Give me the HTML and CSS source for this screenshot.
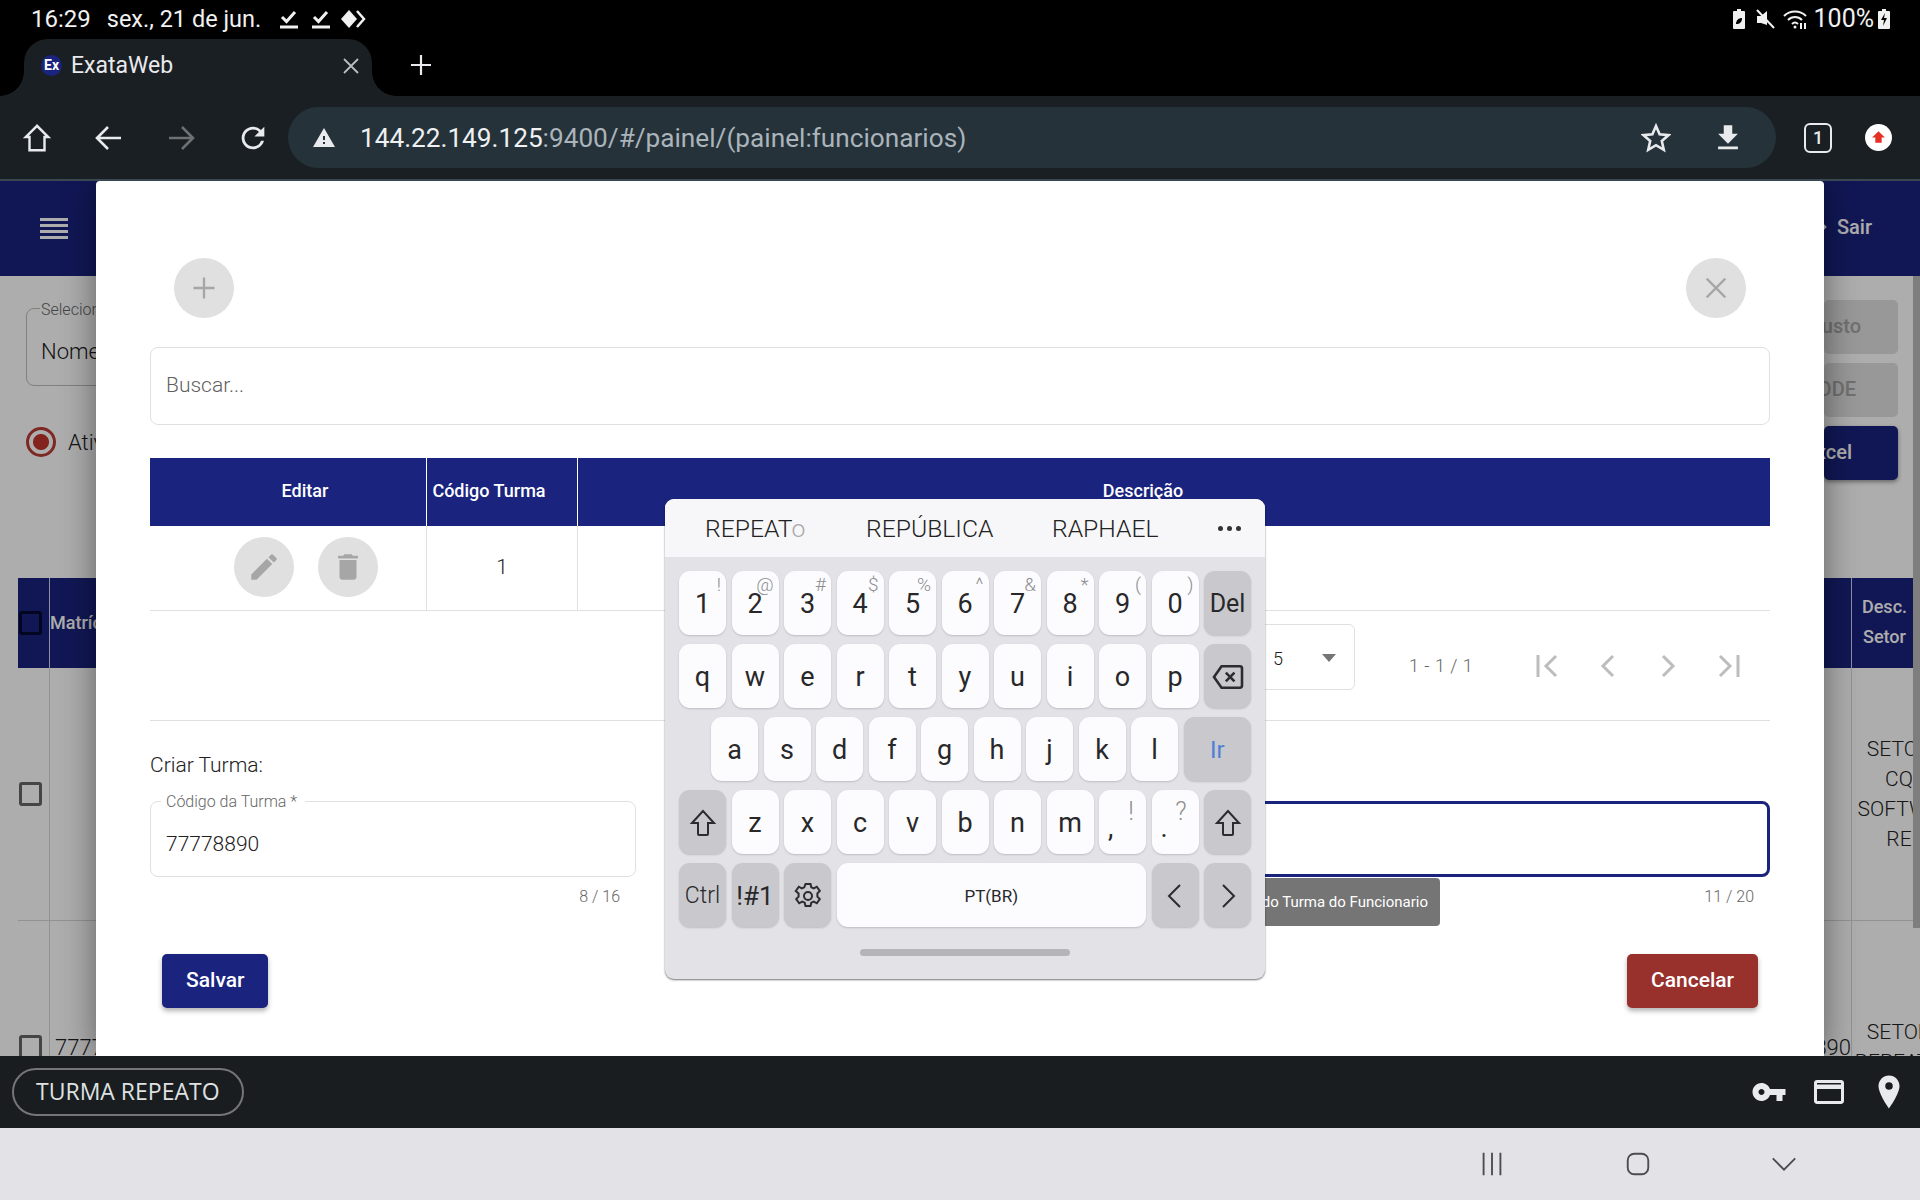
FILE: index.html
```html
<!DOCTYPE html>
<html lang="pt-BR">
  <head>
    <meta charset="UTF-8" />
    <title>ExataWeb</title>
    <link rel="stylesheet" href="styles.css" />
  </head>
  <body>
    <!-- status bar -->
    <div class="status">
      <span class="clock">16:29</span>
      <span class="date">sex., 21 de jun.</span>
      <svg class="st-check" viewBox="0 0 20 20"><path d="M3 8l4.500 4.500L16 3" /><path d="M1 18h18" /></svg>
      <svg class="st-check" viewBox="0 0 20 20"><path d="M3 8l4.500 4.500L16 3" /><path d="M1 18h18" /></svg>
      <svg class="st-diamond" viewBox="0 0 26 20"><path class="fill" d="M9 1l8 9-8 9-8-9z" /><path d="M17 2l7 8-7 8" /></svg>
      <span class="grow"></span>
      <svg class="st-ico" viewBox="0 0 16 22"><path class="fill" d="M3 3h3V1h4v2h3a1 1 0 0 1 1 1v16a1 1 0 0 1-1 1H3a1 1 0 0 1-1-1V4a1 1 0 0 1 1-1z" /><path class="cut" d="M5 16c0-4 3-6 6-6 0 4-2 6-6 6z" /></svg>
      <svg class="st-ico mute" viewBox="0 0 22 22"><path class="fill" d="M3 8h4l6-5v14l-6-2H3z" /><path d="M3 2l17 18" /></svg>
      <svg class="st-ico wifi" viewBox="0 0 26 22"><path d="M2 8c6-6 16-6 22 0M6 12c4-4 10-4 14 0M10 16c2-2 4-2 6 0M19 15v6M23 15v6" /><circle class="fill" cx="13" cy="19" r="1.500" /></svg>
      <span class="batt-num">100%</span>
      <svg class="st-ico batt" viewBox="0 0 16 22"><path class="fill" d="M3 3h3V1h4v2h3a1 1 0 0 1 1 1v16a1 1 0 0 1-1 1H3a1 1 0 0 1-1-1V4a1 1 0 0 1 1-1z" /><path class="cut" d="M9 5l-4 7h3l-1 6 4-8H8z" /></svg>
    </div>

    <!-- tab strip -->
    <div class="tabstrip">
      <div class="tab">
        <span class="favicon">Ex</span>
        <span class="tab-title">ExataWeb</span>
        <svg class="tab-close" viewBox="0 0 20 20"><path d="M3 3l14 14M17 3L3 17" /></svg>
      </div>
      <svg class="tab-new" viewBox="0 0 24 24"><path d="M12 2v20M2 12h20" /></svg>
    </div>

    <!-- toolbar -->
    <div class="toolbar">
      <span class="slot"><svg class="t-ico" viewBox="0 0 30 32"><path d="M15 3L3 15h4v14h16V15h4z" /></svg></span>
      <span class="slot"><svg class="t-ico" viewBox="0 0 30 30"><path d="M27 15H4M14 4L3 15l11 11" /></svg></span>
      <span class="slot dim"><svg class="t-ico" viewBox="0 0 30 30"><path d="M3 15h23M16 4l11 11-11 11" /></svg></span>
      <span class="slot"><svg class="t-fill" viewBox="0 0 24 24"><path d="M17.650 6.350A7.958 7.958 0 0 0 12 4c-4.420 0-7.990 3.580-7.990 8s3.570 8 7.990 8c3.730 0 6.840-2.550 7.730-6h-2.080A5.990 5.990 0 0 1 12 18c-3.310 0-6-2.690-6-6s2.690-6 6-6c1.660 0 3.140.690 4.220 1.780L13 11h7V4l-2.350 2.350z" /></svg></span>
      <div class="omnibox">
        <svg class="warn" viewBox="0 0 24 24"><path d="M1 21h22L12 2 1 21zm12-3h-2v-2h2v2zm0-4h-2v-4h2v4z" /></svg>
        <span class="url"><b>144.22.149.125</b>:9400/#/painel/(painel:funcionarios)</span>
        <span class="grow"></span>
        <span class="slot"><svg class="t-ico star" viewBox="0 0 30 30"><path d="M15 3l3.600 8.300 9 .8-6.800 5.900 2 8.800-7.800-4.600-7.800 4.600 2-8.800L2.400 12.100l9-.8z" /></svg></span>
        <span class="slot"><svg class="t-fill" viewBox="0 0 24 24"><path d="M19 9h-4V3H9v6H5l7 7 7-7zM5 18v2h14v-2H5z" /></svg></span>
      </div>
      <span class="slot sm"><span class="tab-count">1</span></span>
      <span class="slot sm"><span class="update"><svg viewBox="0 0 16 16"><path d="M8 2L2 8h3v5h6V8h3z" /></svg></span></span>
    </div>

    <div class="viewport">
      <!-- page behind the dialog -->
      <div class="page">
        <div class="page-head">
          <div class="burger"><i></i><i></i><i></i><i></i></div>
          <span class="sair"><svg viewBox="0 0 24 24"><path d="M3 12h15M12 6l6 6-6 6" /></svg>Sair</span>
        </div>
        <div class="page-body">
          <div class="bg-left">
            <div class="bg-select">
              <span class="bg-select-label">Selecionar</span>
              Nome
            </div>
            <div class="bg-radio"><span class="radio"></span>Ativo</div>
            <div class="bg-thead">
              <span class="bg-cb-cell"><span class="cb"></span></span>
              <span class="bg-th">Matrícula</span>
            </div>
            <div class="bg-row">
              <span class="bg-cb-cell"><span class="cb"></span></span>
            </div>
            <div class="bg-row">
              <span class="bg-cb-cell"><span class="cb"></span></span>
              <span class="bg-td">77778890</span>
            </div>
          </div>
          <div class="bg-right">
            <div class="bg-btn b-custo"><span>Custo</span></div>
            <div class="bg-btn b-code"><span>CODE</span></div>
            <div class="bg-btn b-excel"><span>Excel</span></div>
            <div class="bg-thead-r">
              <span class="bg-sp"></span>
              <span class="bg-th-r">Desc.<br />Setor</span>
            </div>
            <div class="bg-row-r">
              <span class="bg-sp"></span>
              <span class="bg-td-r">SETOR<br />CQ<br />SOFTWA<br />RE</span>
            </div>
            <div class="bg-row-r">
              <span class="bg-sp num">77890</span>
              <span class="bg-td-r">SETOR<br />REPEATO</span>
            </div>
          </div>
        </div>
        <div class="backdrop"></div>
        <div class="scroll-thumb"></div>
      </div>

      <!-- dialog -->
      <div class="modal">
        <div class="modal-top">
          <span class="round"><svg viewBox="0 0 24 24"><path d="M12 3v18M3 12h18" /></svg></span>
          <span class="round"><svg viewBox="0 0 24 24"><path d="M4 4l16 16M20 4L4 20" /></svg></span>
        </div>
        <div class="search">Buscar...</div>

        <div class="table">
          <div class="th th-edit">Editar</div>
          <div class="th th-code">Código Turma</div>
          <div class="th th-desc">Descrição</div>
          <div class="td td-actions">
            <span class="round small"><svg class="solid" viewBox="0 0 24 24"><path d="M3 17.250V21h3.750L17.810 9.940l-3.750-3.750L3 17.250zM20.710 7.040a1 1 0 0 0 0-1.410l-2.340-2.340a1 1 0 0 0-1.410 0l-1.830 1.830 3.750 3.750 1.830-1.830z" /></svg></span>
            <span class="round small"><svg class="solid" viewBox="0 0 24 24"><path d="M6 19c0 1.100.9 2 2 2h8c1.100 0 2-.9 2-2V7H6v12zM19 4h-3.500l-1-1h-5l-1 1H5v2h14V4z" /></svg></span>
          </div>
          <div class="td">1</div>
          <div class="td last"></div>
        </div>

        <div class="paginator">
          <div class="page-size">5<span class="caret"></span></div>
          <span class="range">1 - 1 / 1</span>
          <span class="pg"><svg viewBox="0 0 30 30"><path d="M5 4v22M23 5L13 15l10 10" /></svg></span>
          <span class="pg"><svg viewBox="0 0 30 30"><path d="M20 5L10 15l10 10" /></svg></span>
          <span class="pg"><svg viewBox="0 0 30 30"><path d="M10 5l10 10-10 10" /></svg></span>
          <span class="pg"><svg viewBox="0 0 30 30"><path d="M25 4v22M7 5l10 10L7 25" /></svg></span>
        </div>

        <div class="form-title">Criar Turma:</div>
        <div class="form-row">
          <div class="form-col first">
            <div class="field">
              <span class="field-label">Código da Turma *</span>
              77778890
            </div>
            <div class="hint">8 / 16</div>
          </div>
          <div class="form-col">
            <div class="field focused">
              <span class="field-label">Descrição da Turma *</span>
              TURMA REPEA
            </div>
            <div class="hint">11 / 20</div>
            <div class="tooltip">Descrição do Turma do Funcionario</div>
          </div>
        </div>
        <div class="form-actions">
          <span class="btn navy">Salvar</span>
          <span class="btn red">Cancelar</span>
        </div>
      </div>

      <!-- floating keyboard -->
      <div class="keyboard">
        <div class="suggest">
          <span class="sg-1">REPEAT<em>o</em></span>
          <span class="sg-2">REPÚBLICA</span>
          <span class="sg-3">RAPHAEL</span>
          <span class="sg-more"><i></i><i></i><i></i></span>
        </div>
        <div class="keys">
          <div class="krow">
            <span class="key"><i>!</i>1</span>
            <span class="key"><i>@</i>2</span>
            <span class="key"><i>#</i>3</span>
            <span class="key"><i>$</i>4</span>
            <span class="key"><i>%</i>5</span>
            <span class="key"><i>^</i>6</span>
            <span class="key"><i>&amp;</i>7</span>
            <span class="key"><i>*</i>8</span>
            <span class="key"><i>(</i>9</span>
            <span class="key"><i>)</i>0</span>
            <span class="key fn del">Del</span>
          </div>
          <div class="krow">
            <span class="key">q</span>
            <span class="key">w</span>
            <span class="key">e</span>
            <span class="key">r</span>
            <span class="key">t</span>
            <span class="key">y</span>
            <span class="key">u</span>
            <span class="key">i</span>
            <span class="key">o</span>
            <span class="key">p</span>
            <span class="key fn"><svg class="k-ico back" viewBox="0 0 30 26"><path d="M9 3h17a2 2 0 0 1 2 2v16a2 2 0 0 1-2 2H9l-7-10z" /><path d="M13 9l8 8M21 9l-8 8" /></svg></span>
          </div>
          <div class="krow home">
            <span class="key">a</span>
            <span class="key">s</span>
            <span class="key">d</span>
            <span class="key">f</span>
            <span class="key">g</span>
            <span class="key">h</span>
            <span class="key">j</span>
            <span class="key">k</span>
            <span class="key">l</span>
            <span class="key fn go">Ir</span>
          </div>
          <div class="krow">
            <span class="key fn"><svg class="k-ico" viewBox="0 0 26 28"><path d="M13 2L2 14h6v11a1 1 0 0 0 1 1h8a1 1 0 0 0 1-1V14h6z" /></svg></span>
            <span class="key">z</span>
            <span class="key">x</span>
            <span class="key">c</span>
            <span class="key">v</span>
            <span class="key">b</span>
            <span class="key">n</span>
            <span class="key">m</span>
            <span class="key punct"><i>!</i>,</span>
            <span class="key punct"><i>?</i>.</span>
            <span class="key fn"><svg class="k-ico" viewBox="0 0 26 28"><path d="M13 2L2 14h6v11a1 1 0 0 0 1 1h8a1 1 0 0 0 1-1V14h6z" /></svg></span>
          </div>
          <div class="krow">
            <span class="key fn ctrl">Ctrl</span>
            <span class="key fn sym">!#1</span>
            <span class="key fn"><svg class="k-ico" viewBox="0 0 28 28"><circle cx="14" cy="14" r="4" /><path d="M11.500 2h5l.8 3.300 2.500 1.100 3-1.700 3 4.300-2.400 2.400v3.200l2.400 2.400-3 4.300-3-1.700-2.500 1.100-.8 3.300h-5l-.8-3.300-2.500-1.100-3 1.700-3-4.300 2.400-2.400v-3.200L1.800 9l3-4.300 3 1.700 2.500-1.100z" /></svg></span>
            <span class="key space">PT(BR)</span>
            <span class="key fn"><svg class="k-ico" viewBox="0 0 20 28"><path d="M15 3L4 14l11 11" /></svg></span>
            <span class="key fn"><svg class="k-ico" viewBox="0 0 20 28"><path d="M5 3l11 11L5 25" /></svg></span>
          </div>
        </div>
        <div class="kb-handle"></div>
      </div>
    </div>

    <!-- autofill bar -->
    <div class="autofill">
      <span class="chip">TURMA REPEATO</span>
      <span class="grow"></span>
      <svg class="af-ico" viewBox="0 0 24 24"><path d="M12.650 10C11.830 7.670 9.610 6 7 6c-3.310 0-6 2.690-6 6s2.690 6 6 6c2.610 0 4.830-1.670 5.650-4H17v4h4v-4h2v-4H12.650zM7 14c-1.100 0-2-.9-2-2s.9-2 2-2 2 .9 2 2-.9 2-2 2z" /></svg>
      <svg class="af-ico" viewBox="0 0 24 24"><path d="M20 4H4c-1.110 0-1.990.89-1.990 2L2 18c0 1.110.89 2 2 2h16c1.110 0 2-.89 2-2V6c0-1.110-.89-2-2-2zm0 14H4v-8h16v8zm0-11H4V6h16v1z" /></svg>
      <svg class="af-ico" viewBox="0 0 24 24"><path d="M12 1C8.130 1 5 4.130 5 8c0 5.250 7 15 7 15s7-9.750 7-15c0-3.870-3.130-7-7-7zm0 9.500a2.500 2.500 0 0 1 0-5 2.500 2.500 0 0 1 0 5z" /></svg>
    </div>

    <!-- android nav -->
    <div class="navbar">
      <span class="nav-slot"><svg viewBox="0 0 30 30"><path d="M6 3v24M15 3v24M24 3v24" /></svg></span>
      <span class="nav-slot"><svg viewBox="0 0 30 30"><rect x="4" y="4" width="22" height="22" rx="7" /></svg></span>
      <span class="nav-slot"><svg viewBox="0 0 30 30"><path d="M3 9l12 12L27 9" /></svg></span>
    </div>
  </body>
</html>
```

FILE: styles.css
```css
* {
  box-sizing: border-box;
}
html,
body {
  margin: 0;
  height: 100%;
}
body {
  width: 1920px;
  height: 1200px;
  overflow: hidden;
  display: flex;
  flex-direction: column;
  font-family: Roboto, "Liberation Sans", sans-serif;
  background: #000;
  color: #212121;
}
svg {
  display: block;
  fill: none;
  stroke: currentColor;
}
.grow {
  flex: 1;
}

/* status bar */
.status {
  height: 39px;
  flex: none;
  display: flex;
  align-items: center;
  padding: 0 28px 2px 31px;
  color: #f1f1f1;
  font-size: 24px;
}
.date {
  margin-left: 16px;
  font-size: 23.500px;
}
.st-check {
  width: 20px;
  height: 20px;
  stroke-width: 3;
}
.date + .st-check {
  margin-left: 18px;
}
.st-check + .st-check {
  margin-left: 12px;
}
.st-diamond {
  width: 26px;
  height: 20px;
  stroke-width: 2.500;
  margin-left: 9px;
}
.status .fill {
  fill: #f1f1f1;
  stroke: none;
}
.status .cut {
  fill: #000;
  stroke: none;
}
.st-ico {
  width: 16px;
  height: 22px;
  stroke-width: 2;
}
.st-ico.mute {
  width: 22px;
  margin-left: 7px;
}
.st-ico.wifi {
  width: 26px;
  margin-left: 6px;
}
.batt-num {
  margin-left: 6px;
  font-size: 25px;
}
.st-ico.batt {
  margin-left: 2px;
}

/* tabs */
.tabstrip {
  height: 57px;
  flex: none;
  display: flex;
  align-items: flex-start;
  padding-left: 24px;
}
.tab {
  position: relative;
  width: 348px;
  height: 57px;
  display: flex;
  align-items: center;
  padding: 0 11px 4px 17px;
  background: #1a1f23;
  border-radius: 24px 24px 0 0;
  color: #e8eaed;
}
.tab::before,
.tab::after {
  content: "";
  position: absolute;
  bottom: 0;
  width: 24px;
  height: 24px;
}
.tab::before {
  left: -24px;
  background: radial-gradient(circle at 0 0, #000 23.500px, #1a1f23 24px);
}
.tab::after {
  right: -24px;
  background: radial-gradient(circle at 100% 0, #000 23.500px, #1a1f23 24px);
}
.favicon {
  width: 21px;
  height: 21px;
  border-radius: 50%;
  background: #1a237e;
  color: #fff;
  font-size: 14px;
  font-weight: 700;
  text-align: center;
  line-height: 21px;
}
.tab-title {
  flex: 1;
  margin-left: 9px;
  font-size: 23px;
}
.tab-close {
  width: 20px;
  height: 20px;
  color: #b9bdc1;
  stroke-width: 1.800;
}
.tab-new {
  width: 24px;
  height: 24px;
  margin: 14px 0 0 37px;
  color: #e8eaed;
  stroke-width: 2.200;
}

/* toolbar */
.toolbar {
  height: 85px;
  flex: none;
  display: flex;
  align-items: center;
  padding: 0 12px 0 1px;
  background: #1a1f23;
  border-bottom: 2px solid #3a4750;
  color: #e8eaed;
}
.slot {
  width: 72px;
  height: 60px;
  flex: none;
  display: flex;
  align-items: center;
  justify-content: center;
}
.slot.sm {
  width: 60px;
}
.slot.dim {
  color: #6d7174;
}
.t-ico {
  width: 30px;
  height: 30px;
  stroke-width: 2.600;
}
.t-fill {
  width: 34px;
  height: 34px;
  fill: currentColor;
  stroke: none;
}
.omnibox {
  width: 1488px;
  height: 61px;
  flex: none;
  margin: 0 12px 0 -1px;
  padding: 0 12px 0 24px;
  display: flex;
  align-items: center;
  background: #25323a;
  border-radius: 31px;
}
.warn {
  width: 24px;
  height: 24px;
  fill: #e8eaed;
  stroke: none;
}
.url {
  margin-left: 24px;
  font-size: 26.200px;
  color: #aab4ba;
}
.url b {
  font-weight: 400;
  color: #eef0f1;
}
.tab-count {
  width: 28px;
  height: 30px;
  border: 2.500px solid #e8eaed;
  border-radius: 6px;
  font-size: 18px;
  font-weight: 500;
  text-align: center;
  line-height: 25px;
}
.update {
  width: 27px;
  height: 27px;
  border-radius: 50%;
  background: #fff;
  display: flex;
  align-items: center;
  justify-content: center;
}
.update svg {
  width: 17px;
  height: 17px;
  fill: #e53125;
  stroke: none;
}

/* page behind */
.viewport {
  position: relative;
  flex: 1;
  overflow: hidden;
  background: #fff;
}
.page {
  height: 100%;
  color: #212121;
}
.page-head {
  height: 95px;
  display: flex;
  align-items: center;
  justify-content: space-between;
  padding: 0 48px 0 40px;
  background: #1a237e;
  color: #fff;
}
.burger i {
  display: block;
  width: 28px;
  height: 3px;
  margin: 3px 0;
  background: #fff;
}
.sair {
  display: flex;
  align-items: center;
  gap: 6px;
  padding-bottom: 4px;
  font-size: 20px;
  font-weight: 500;
}
.sair svg {
  width: 24px;
  height: 24px;
  stroke-width: 2.500;
}
.page-body {
  display: flex;
  justify-content: space-between;
}
.bg-left {
  width: 96px;
  overflow: hidden;
  padding-top: 32px;
  flex: none;
}
.bg-select {
  position: relative;
  width: 240px;
  height: 78px;
  margin-left: 26px;
  padding: 30px 14px 0;
  border: 1px solid #bdbdbd;
  border-radius: 8px;
  font-size: 22px;
  font-weight: 300;
}
.bg-select-label {
  position: absolute;
  top: -9px;
  left: 13px;
  padding: 0 1px;
  background: #fff;
  font-size: 16px;
  color: #666;
}
.bg-radio {
  display: flex;
  align-items: center;
  width: 200px;
  height: 30px;
  margin: 41px 0 0 26px;
  font-size: 22px;
  font-weight: 300;
}
.radio {
  width: 30px;
  height: 30px;
  margin-right: 12px;
  border: 3.500px solid #b93b33;
  border-radius: 50%;
  background: radial-gradient(circle, #c0352c 7.500px, #fff 8.500px);
}
.bg-thead {
  display: flex;
  width: 240px;
  height: 90px;
  margin: 121px 0 0 18px;
  background: #1a237e;
  color: #fff;
}
.bg-cb-cell {
  width: 32px;
  flex: none;
  display: flex;
  align-items: center;
  border-right: 1px solid #cfd2e8;
}
.cb {
  width: 23px;
  height: 24px;
  margin-left: 1px;
  border: 3px solid #666;
  border-radius: 3px;
}
.bg-thead .cb {
  border-color: #050a30;
}
.bg-th {
  align-self: center;
  padding-bottom: 2px;
  font-size: 18px;
  font-weight: 500;
  white-space: nowrap;
}
.bg-row {
  display: flex;
  align-items: stretch;
  width: 240px;
  height: 253px;
  margin-left: 18px;
  border-bottom: 1px solid #d8d8d8;
}
.bg-row .bg-cb-cell {
  border-right-color: #d8d8d8;
}
.bg-td {
  align-self: center;
  padding-left: 5px;
  font-size: 22px;
  font-weight: 300;
}
.bg-right {
  width: 96px;
  flex: none;
  overflow: hidden;
  padding-top: 24px;
}
.bg-btn {
  display: flex;
  justify-content: flex-end;
  width: 74px;
  height: 54px;
  margin-bottom: 9px;
  border-radius: 5px;
  background: #e0e0e0;
  color: #a6a6a6;
  font-size: 20px;
  font-weight: 500;
  line-height: 52px;
  overflow: hidden;
  white-space: nowrap;
}
.b-custo {
  padding-right: 37px;
}
.b-code {
  padding-right: 42px;
}
.b-excel {
  padding-right: 46px;
  background: #1a237e;
  color: #fff;
  margin-bottom: 98px;
  box-shadow: 0 2px 4px rgba(0, 0, 0, 0.4);
}
.bg-btn span {
  flex: none;
}
.bg-thead-r {
  display: flex;
  height: 90px;
  background: #1a237e;
  color: #fff;
}
.bg-sp {
  width: 28px;
  flex: none;
  border-right: 1px solid #cfd2e8;
  white-space: nowrap;
  direction: rtl;
}
.bg-th-r {
  width: 68px;
  flex: none;
  align-self: center;
  text-align: center;
  font-size: 18px;
  font-weight: 500;
  line-height: 30px;
  padding: 0 3px 2px 0;
}
.bg-row-r {
  display: flex;
  width: 122px;
  height: 253px;
  border-bottom: 1px solid #d8d8d8;
}
.bg-row-r .bg-sp {
  border-right-color: #d8d8d8;
}
.bg-sp.num {
  align-self: stretch;
  line-height: 253px;
  font-size: 22px;
  font-weight: 300;
  overflow: hidden;
}
.bg-td-r {
  flex: 1;
  align-self: center;
  text-align: center;
  font-size: 21px;
  font-weight: 300;
  line-height: 30px;
  white-space: nowrap;
}
.backdrop {
  position: absolute;
  inset: 0;
  background: rgba(0, 0, 0, 0.32);
}
.scroll-thumb {
  position: absolute;
  top: 95px;
  right: 0;
  width: 7px;
  height: 652px;
  background: #7e7e7e;
}

/* dialog */
.modal {
  position: absolute;
  top: 0;
  bottom: 0;
  left: 96px;
  width: 1728px;
  padding: 77px 54px 0;
  background: #fff;
  border-radius: 4px 4px 0 0;
  box-shadow: 0 0 34px rgba(0, 0, 0, 0.45);
}
.modal-top {
  display: flex;
  justify-content: space-between;
  padding: 0 24px;
}
.round {
  width: 60px;
  height: 60px;
  flex: none;
  border-radius: 50%;
  background: #e0e0e0;
  color: #a6a6a6;
  display: flex;
  align-items: center;
  justify-content: center;
}
.round svg {
  width: 28px;
  height: 28px;
  stroke-width: 2;
}
.round .solid {
  width: 34px;
  height: 34px;
  fill: #a6a6a6;
  stroke: none;
}
.search {
  height: 78px;
  margin-top: 29px;
  padding-left: 15px;
  border: 1px solid #e0e0e0;
  border-radius: 8px;
  font-size: 21px;
  font-weight: 300;
  line-height: 74px;
  color: #5f5f5f;
}
.table {
  display: grid;
  grid-template-columns: 277px 151px 1fr;
  grid-template-rows: 68px 85px;
  margin-top: 33px;
}
.th {
  display: flex;
  align-items: center;
  justify-content: center;
  padding-bottom: 4px;
  background: #1a237e;
  border-right: 1px solid #fff;
  color: #fff;
  font-size: 18px;
  font-weight: 500;
}
.th-edit {
  padding-left: 34px;
}
.th-code {
  padding-right: 26px;
}
.th-desc {
  border-right: 0;
  padding-right: 62px;
}
.td {
  display: flex;
  align-items: center;
  justify-content: center;
  border-right: 1px solid #e0e0e0;
  border-bottom: 1px solid #e0e0e0;
  font-size: 21px;
  font-weight: 300;
  padding-bottom: 2px;
}
.td.last {
  border-right: 0;
}
.td-actions {
  gap: 24px;
  padding: 0 0 3px 35px;
}
.paginator {
  display: flex;
  align-items: center;
  height: 110px;
  padding: 0 12px 0 0;
  border-bottom: 1px solid #e0e0e0;
}
.page-size {
  position: relative;
  width: 180px;
  height: 66px;
  margin-left: auto;
  margin-bottom: 17px;
  padding-left: 97px;
  border: 1px solid #e0e0e0;
  border-radius: 6px;
  font-size: 18px;
  font-weight: 300;
  line-height: 68px;
}
.caret {
  position: absolute;
  top: 29px;
  right: 18px;
  border: 7px solid transparent;
  border-top: 8px solid #757575;
  border-bottom: 0;
}
.range {
  width: 109px;
  margin-left: 54px;
  font-size: 18px;
  font-weight: 300;
  color: #666;
  letter-spacing: 0.5px;
}
.pg {
  width: 60px;
  height: 60px;
  display: flex;
  align-items: center;
  justify-content: center;
  color: #bdbdbd;
}
.pg svg {
  width: 30px;
  height: 30px;
  stroke-width: 3;
}
.form-title {
  margin-top: 32px;
  font-size: 21px;
  font-weight: 300;
  line-height: 24px;
}
.form-row {
  display: flex;
  gap: 32px;
  margin-top: 24px;
}
.form-col {
  position: relative;
  flex: 1;
  min-width: 0;
}
.form-col.first {
  flex: none;
  width: 486px;
}
.field {
  position: relative;
  height: 76px;
  padding: 29px 15px 0;
  border: 1px solid #e0e0e0;
  border-radius: 8px;
  font-size: 21px;
  font-weight: 300;
  line-height: 26px;
}
.field-label {
  position: absolute;
  top: -9px;
  left: 10px;
  padding: 0 8px 0 5px;
  background: #fff;
  font-size: 16px;
  line-height: 18px;
  color: #666;
}
.field.focused {
  padding: 27px 13px 0;
  border: 3px solid #1a237e;
}
.hint {
  margin-top: 10px;
  padding-right: 16px;
  text-align: right;
  font-size: 16px;
  font-weight: 300;
  line-height: 20px;
  color: #666;
}
.tooltip {
  position: absolute;
  top: 77px;
  right: 330px;
  height: 48px;
  padding: 0 12px;
  border-radius: 4px;
  background: #757575;
  color: #fff;
  font-size: 15px;
  line-height: 48px;
  white-space: nowrap;
}
.form-actions {
  display: flex;
  justify-content: space-between;
  margin-top: 47px;
  padding: 0 12px;
}
.btn {
  height: 54px;
  padding: 0 24px;
  border-radius: 5px;
  color: #fff;
  font-size: 21px;
  font-weight: 500;
  line-height: 52px;
  box-shadow: 0 3px 5px rgba(0, 0, 0, 0.3);
}
.navy {
  background: #1a237e;
}
.red {
  background: #98302c;
}

/* keyboard */
.keyboard {
  position: absolute;
  top: 318px;
  left: 665px;
  width: 600px;
  height: 480px;
  border-radius: 9px;
  background: #e2e2e7;
  box-shadow: 0 1px 2px rgba(0, 0, 0, 0.55);
}
.suggest {
  position: relative;
  height: 58px;
  background: #f7f7f9;
  border-radius: 9px 9px 0 0;
  font-size: 24.700px;
  font-weight: 300;
  line-height: 60px;
  color: #222;
}
.suggest span {
  position: absolute;
  top: 0;
}
.sg-1 {
  left: 40px;
}
.sg-1 em {
  font-style: normal;
  color: #a8a8ac;
}
.sg-2 {
  left: 201px;
}
.sg-3 {
  left: 387px;
}
.sg-more {
  left: 553px;
  display: flex;
  gap: 4px;
  height: 58px;
  align-items: center;
}
.sg-more i {
  width: 5px;
  height: 5px;
  border-radius: 50%;
  background: #333;
}
.keys {
  display: flex;
  flex-direction: column;
  gap: 9px;
  padding: 14px 14px 0;
}
.krow {
  display: flex;
  gap: 5.500px;
  height: 64px;
}
.krow.home {
  padding-left: 32px;
}
.key {
  position: relative;
  flex: 0 0 47px;
  display: flex;
  align-items: center;
  justify-content: center;
  padding-top: 1px;
  border-radius: 11px;
  background: #fcfcfe;
  box-shadow: 0 1px 2px rgba(0, 0, 0, 0.16);
  color: #28282a;
  font-size: 27px;
  font-weight: 400;
}
.key i {
  position: absolute;
  top: 2px;
  right: 5px;
  font-style: normal;
  font-size: 19px;
  font-weight: 300;
  color: #8e8e92;
}
.key.fn {
  background: #c8c8cd;
}
.key.go {
  flex: 0 0 67.500px;
  color: #4f7fd6;
  font-size: 24px;
}
.key.ctrl {
  font-size: 23px;
  font-weight: 300;
}
.key.sym {
  font-size: 26px;
}
.key.del {
  font-size: 25px;
}
.key.punct {
  align-items: flex-end;
  justify-content: flex-start;
  padding: 0 0 12px 9px;
  line-height: 1;
}
.key.punct i {
  top: 9px;
  right: 12px;
  font-size: 25px;
}
.key.space {
  flex: 0 0 309.500px;
  font-size: 17px;
  font-weight: 400;
}
.k-ico {
  width: 28px;
  height: 28px;
  color: #2c2c2e;
  stroke-width: 2;
}
.k-ico.back {
  width: 34px;
  stroke-width: 2.400;
}
.kb-handle {
  width: 210px;
  height: 7px;
  margin: 22px auto 0;
  border-radius: 4px;
  background: #b4b4b9;
}

/* autofill */
.autofill {
  height: 72px;
  flex: none;
  display: flex;
  align-items: center;
  gap: 24px;
  padding: 0 13px 0 12px;
  background: #191d20;
  color: #e8eaed;
}
.chip {
  height: 48px;
  margin-bottom: 1px;
  padding: 0 22px;
  border: 2px solid #757575;
  border-radius: 24px;
  font-family: "Open Sans", Roboto, sans-serif;
  font-size: 23px;
  line-height: 42px;
  color: #dfe1e3;
}
.af-ico {
  width: 36px;
  height: 36px;
  fill: #e8eaed;
  stroke: none;
}

/* nav */
.navbar {
  height: 72px;
  flex: none;
  display: flex;
  align-items: center;
  justify-content: flex-end;
  padding-right: 63px;
  background: #e2e2e7;
  color: #4c4c50;
}
.nav-slot {
  width: 146px;
  display: flex;
  justify-content: center;
}
.nav-slot svg {
  width: 28px;
  height: 28px;
  stroke-width: 2;
}
```
